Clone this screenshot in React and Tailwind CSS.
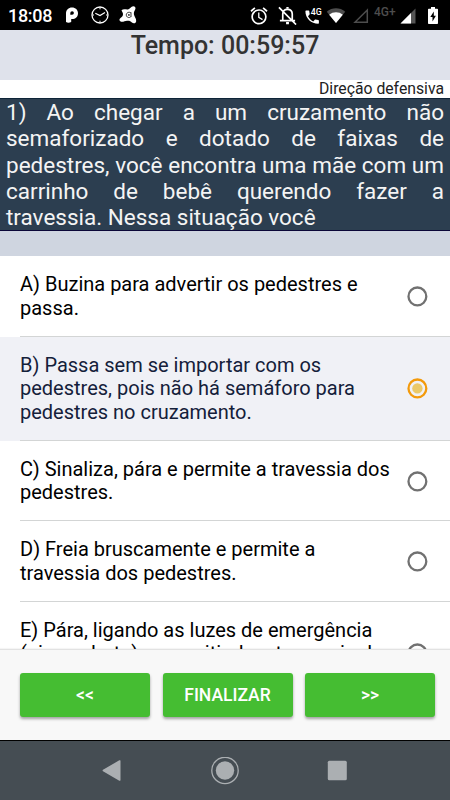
import React, { useState } from 'react';

const question = [
  '1) Ao chegar a um cruzamento não',
  'semaforizado e dotado de faixas de',
  'pedestres, você encontra uma mãe com um',
  'carrinho de bebê querendo fazer a',
];

const options = [
  {
    id: 'A',
    lines: ['A) Buzina para advertir os pedestres e', 'passa.'],
  },
  {
    id: 'B',
    lines: [
      'B) Passa sem se importar com os',
      'pedestres, pois não há semáforo para',
      'pedestres no cruzamento.',
    ],
  },
  {
    id: 'C',
    lines: ['C) Sinaliza, pára e permite a travessia dos', 'pedestres.'],
  },
  {
    id: 'D',
    lines: ['D) Freia bruscamente e permite a', 'travessia dos pedestres.'],
  },
  {
    id: 'E',
    lines: ['E) Pára, ligando as luzes de emergência', '(pisca-alerta) e permitindo a travessia dos'],
    tall: true,
  },
];

const StatusBar = () => (
  <div className="h-[30px] shrink-0 bg-black text-white flex items-center justify-between pl-2 pr-[12px]">
    <div className="flex items-center h-full">
      <span className="w-[57px] text-[18px] leading-[30px] pt-[1px] font-medium tracking-[-0.3px]">18:08</span>
      <svg className="w-[14px] h-[18px]" viewBox="0 0 14 18">
        <path
          fillRule="evenodd"
          fill="#fff"
          d="M1 7.500C1 3.800 3.500 1.400 7 1.400s6 2.300 6 5.800-2.500 5.900-6 5.900h-.8V16c-1.800.900-3.700.900-5.200 0zM5.300 6.900v1.900h1.800a1.800 1.800 0 1 0-1.800-1.900z"
        />
      </svg>
      <svg className="w-[18px] h-[18px] ml-[11.500px]" viewBox="0 0 18 18" fill="none" stroke="#fff">
        <circle cx="9" cy="9" r="8" strokeWidth="1.300" />
        <path d="M4.300 7.200 9 9.500l5-3" strokeWidth="1.200" />
        <path d="M9 1.500v1.800M9 14.700v1.800M1.500 9h1.500M15 9h1.500" strokeWidth="1" />
      </svg>
      <svg className="w-[20px] h-[20px] ml-[9.500px]" viewBox="0 0 20 20">
        <path
          d="M3.500 5.200C5.500 3.600 8 4.800 10 4.500c2-.4 3-3.200 5.200-3.200 2 0 2.800 1.700 2 3.200-.9 1.700-1.500 2.800-1.300 4.700.2 2.200 2.400 4 2.300 6.700-.1 2.400-2.700 3-4.300 1.500-1.400-1.400-2.800-1.900-4.900-1.600-2 .3-4 1.300-5.900.9-2-.5-2.200-2.600-.6-3.700 1.300-.9 2.500-2 2.500-3.700C5 7.300 4 6.900 3.500 5.200z"
          fill="#fff"
        />
        <path d="M13 8c-1.700-1.500-4.700-.5-4.700 1.900s2.800 3.500 4.400 1.900M13 7.300v4.700" fill="none" stroke="#222" strokeWidth=".9" />
        <circle cx="10.900" cy="9.900" r=".9" fill="#222" />
      </svg>
    </div>

    <div className="flex items-center h-full pt-[1px]">
      <svg className="w-[18px] h-[18px]" viewBox="1.500 1.500 21 21" fill="#fff">
        <path d="M22 5.720l-4.600-3.860-1.290 1.530 4.600 3.860L22 5.720zM7.880 3.390L6.600 1.860 2 5.710l1.290 1.530 4.590-3.850zM12.500 8H11v6l4.750 2.850.75-1.230-4-2.370V8zM12 4c-4.970 0-9 4.030-9 9s4.020 9 9 9a9 9 0 0 0 0-18zm0 16c-3.870 0-7-3.130-7-7s3.130-7 7-7 7 3.130 7 7-3.130 7-7 7z" />
      </svg>
      <svg className="w-[19px] h-[19px] ml-[10px]" viewBox="2 2 20 20" fill="none" stroke="#fff" strokeWidth="1.800">
        <path d="M7 17.500v-7c0-3 2-5 5-5s5 2 5 5v7M4 17.500h16M3 3.500l18 18" />
        <path d="M10.500 20h3M12 3v2" strokeWidth="2.400" />
      </svg>
      <svg className="w-[18px] h-[18px] ml-[7px]" viewBox="0 0 18 18">
        <path
          d="M2.100 3.500H4.600c.4 0 .7.300.7.700 0 .9.200 1.800.4 2.600.1.300 0 .6-.2.800L4 9.200c1.200 2.300 2.900 4 5.200 5.200l1.600-1.600c.2-.2.500-.3.800-.2.900.3 1.700.4 2.600.4.400 0 .7.300.7.700v2.400c0 .4-.3.700-.7.700C7.200 16.800 1.400 11.200 1.400 4.200c0-.4.300-.7.700-.7z"
          fill="#fff"
        />
        <text x="6.700" y="8.300" fontSize="9" fontWeight="500" fill="#fff" textLength="11" lengthAdjust="spacingAndGlyphs">
          4G
        </text>
      </svg>
      <svg className="w-[20px] h-[17px] ml-[4px]" viewBox="0 0 20 17">
        <path d="M.8 4.800C6 .2 14 .2 19.200 4.800L10 16z" fill="#4d4d4d" />
        <path d="M3.200 7.800C7 4.500 13 4.500 16.800 7.800L10 16z" fill="#fff" />
      </svg>
      <svg className="w-[16px] h-[16px] ml-[7px]" viewBox="0 0 16 16">
        <path d="M14.300 2v12.300H2z" fill="none" stroke="#4d4d4d" strokeWidth="1.500" />
      </svg>
      <span className="w-[22px] ml-[5px] mb-[7px] text-[12px] leading-none font-medium text-[#4d4d4d]">4G+</span>
      <svg className="w-[16px] h-[16px] ml-[4px]" viewBox="0 0 16 16">
        <path d="M15.500 .5v15H.5z" fill="#555" />
        <path d="M11 5v10.500H.5z" fill="#fff" />
      </svg>
      <svg className="w-[10px] h-[17px] ml-[12px]" viewBox="0 0 10 17">
        <path d="M3 0h4v1.700h2.200c.5 0 .8.300.8.800v13.700c0 .5-.3.800-.8.800H.8c-.5 0-.8-.3-.8-.8V2.500c0-.5.300-.8.800-.8H3z" fill="#fff" />
        <path d="M5.800 4.500 2.300 10h2.200v4.500L7.900 8.700H5.800z" fill="#000" />
      </svg>
    </div>
  </div>
);

const Radio = ({ checked }) => (
  <svg className="w-[21px] h-[21px] shrink-0" viewBox="0 0 21 21">
    <circle cx="10.400" cy="10.400" r="8.900" fill="none" stroke={checked ? '#f39a0b' : '#717171'} strokeWidth="2.300" />
    {checked && <circle cx="10.400" cy="10.400" r="5.200" fill="#ebc968" />}
  </svg>
);

const Option = ({ option, checked, onSelect }) => (
  <button
    type="button"
    onClick={onSelect}
    className={`w-full block text-left pl-5 ${checked ? 'bg-[#f0f1f6] text-[#14203a]' : 'bg-white text-black'}`}
  >
    <div
      className={`flex justify-between pt-[17px] pb-[15.500px] pr-[22px] border-b border-[#d3d5d5] ${
        option.tall ? 'h-[104px]' : ''
      }`}
    >
      <p className="text-[20px] leading-[23.500px] whitespace-nowrap">
        {option.lines.map((line) => (
          <span key={line} className="block">
            {line}
          </span>
        ))}
      </p>
      <span className="flex items-center">
        <Radio checked={checked} />
      </span>
    </div>
  </button>
);

const ActionButton = ({ children }) => (
  <button
    type="button"
    className="h-[44px] w-[130px] rounded-[3px] bg-[#45bd32] text-white text-[17.500px] font-medium shadow-[0_2px_3px_rgba(0,0,0,0.350)]"
  >
    {children}
  </button>
);

const App = () => {
  const [selected, setSelected] = useState('B');

  return (
    <div className="w-[450px] h-[800px] overflow-hidden flex flex-col bg-white font-['Roboto',sans-serif]">
      <StatusBar />

      <div className="h-[50px] shrink-0 bg-[#dfe2eb] text-center text-[#333] text-[25px] leading-[31px] font-medium">
        Tempo: 00:59:57
      </div>

      <div className="h-[18px] shrink-0 pr-[6px] text-right text-[15.750px] leading-[18px] text-[#222]">
        Direção defensiva
      </div>

      <div className="h-[133px] shrink-0 px-[6px] bg-[#2c3e50] border-t border-b border-t-[#0e2438] border-b-[#0b0638] text-[#f4f4f4] text-[22.500px] leading-[26.300px]">
        {question.map((line) => (
          <p key={line} className="text-justify [text-align-last:justify]">
            {line}
          </p>
        ))}
        <p>travessia. Nessa situação você</p>
      </div>

      <div className="h-[25px] shrink-0 bg-[#cfd5e0]" />

      <div className="flex-1 min-h-0 overflow-hidden">
        {options.map((option) => (
          <Option
            key={option.id}
            option={option}
            checked={selected === option.id}
            onSelect={() => setSelected(option.id)}
          />
        ))}
      </div>

      <div className="h-[91px] shrink-0 bg-[#f8f8f8] border-t border-[#e2e2e2] shadow-[0_-1px_1px_rgba(0,0,0,0.040)] pt-[23px] pl-5 pr-[15px] flex justify-between items-start">
        <ActionButton>&lt;&lt;</ActionButton>
        <ActionButton>FINALIZAR</ActionButton>
        <ActionButton>&gt;&gt;</ActionButton>
      </div>

      <div className="h-[60px] shrink-0 bg-[#454d53] border-t border-black flex items-center justify-center gap-[84px]">
        <svg className="w-[28px] h-[28px]" viewBox="0 0 28 28">
          <path d="M21.500 4v19a.8.8 0 0 1-1.200.7L4 14.200a.8.8 0 0 1 0-1.400L20.300 3.300a.8.8 0 0 1 1.200.7z" fill="#abafb2" />
        </svg>
        <svg className="w-[28px] h-[28px]" viewBox="0 0 28 28">
          <circle cx="14" cy="13.500" r="13.200" fill="none" stroke="#abafb2" strokeWidth="1.300" />
          <circle cx="14" cy="13.500" r="9.200" fill="#abafb2" />
        </svg>
        <svg className="w-[28px] h-[28px]" viewBox="0 0 28 28">
          <rect x="4.800" y="3.800" width="19" height="19.400" rx="1.500" fill="#abafb2" />
        </svg>
      </div>
    </div>
  );
};

export default App;
